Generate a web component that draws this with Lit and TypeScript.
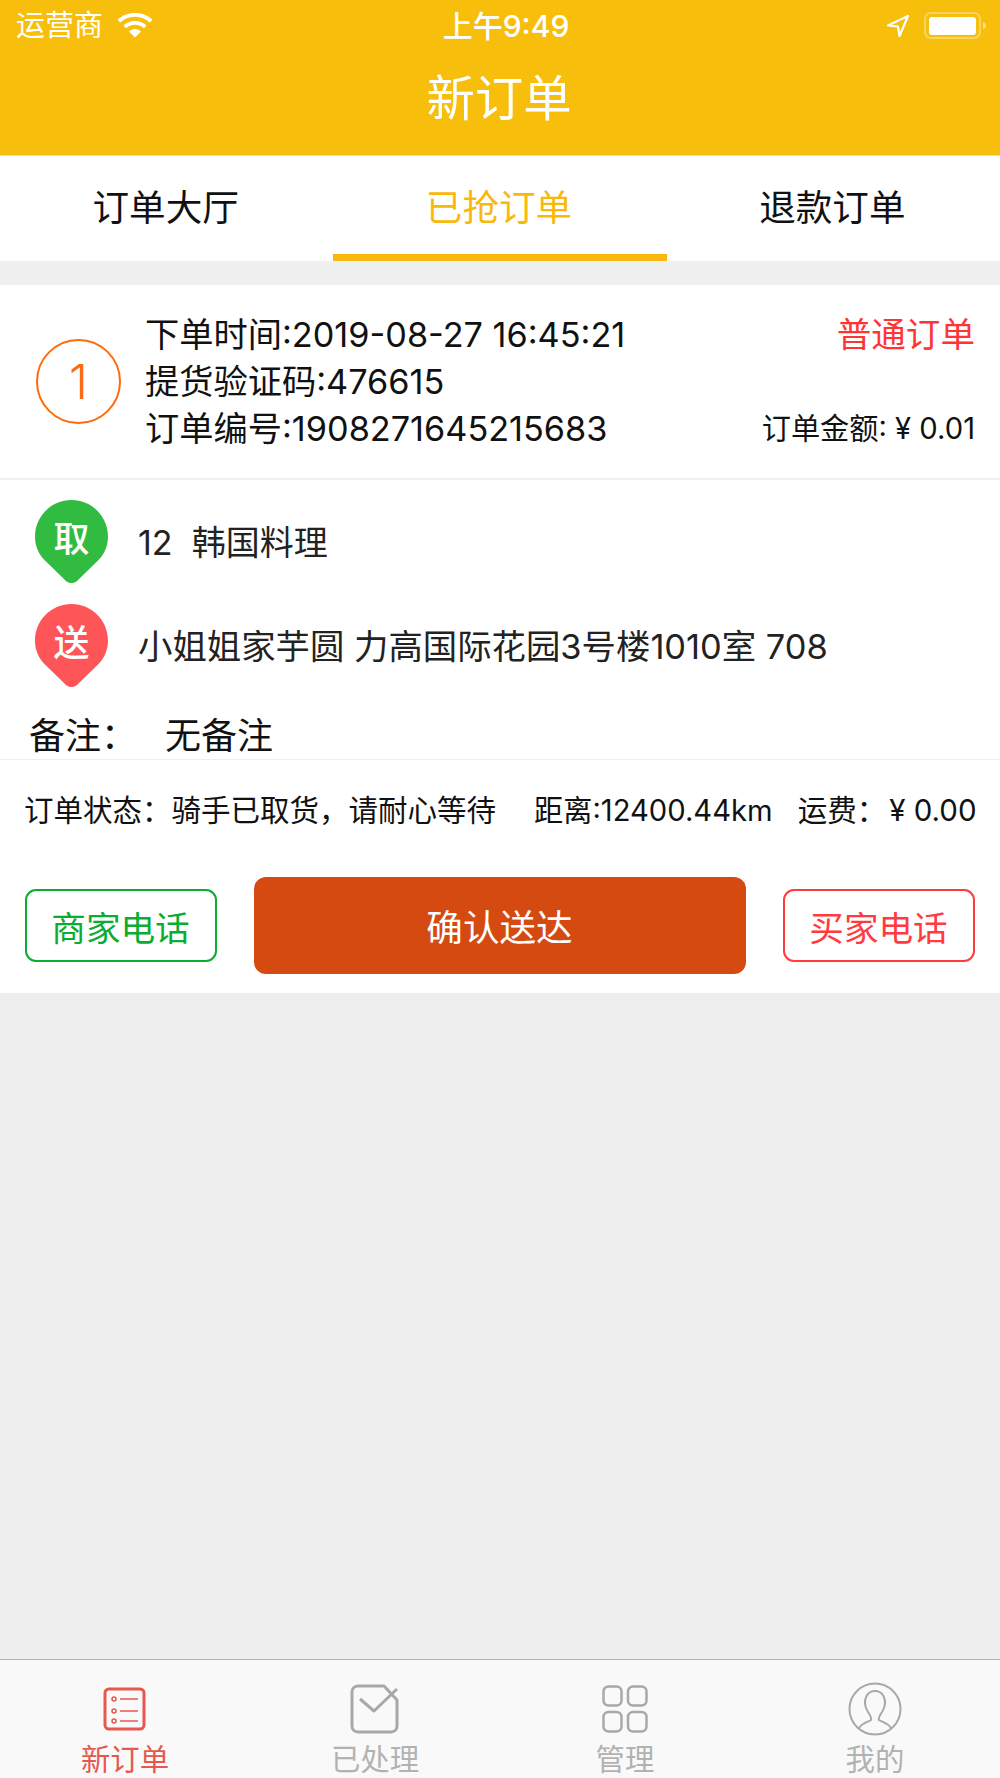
import { LitElement, html, css, svg } from "lit";
import { customElement } from "lit/decorators.js";

const pin = (color: string) => svg`<svg class="pinbg" width="73" height="83" viewBox="0 0 73 83"><path fill="${color}" d="M36.5 0C56.6 0 73 16.3 73 36.5C73 46.5 69 54.5 63 60.5L43.5 79.5C39.5 84.2 33.5 84.2 29.5 79.5L10 60.5C4 54.5 0 46.5 0 36.5C0 16.3 16.4 0 36.5 0Z"/></svg>`;

@customElement("app-root")
export class AppRoot extends LitElement {
  static styles = css`
    :host { display: block; font-family: "Inter", "Noto Sans CJK SC", sans-serif; color: #111; }
    * { box-sizing: border-box; }
    .page { height: 1778px; width: 1000px; display: flex; flex-direction: column; background: #eeeeee; overflow: hidden; }
    .head { height: 156px; background: #f8be0c; border-bottom: 1px solid #ddd; color: #fff; display: flex; flex-direction: column; flex: none; }
    .status { height: 50px; display: grid; grid-template-columns: 1fr auto 1fr; align-items: center; padding: 0 12px 0 16px; flex: none; }
    .status-left { display: flex; align-items: center; }
    .carrier { font-size: 29px; line-height: 50px; margin-top: 1px; }
    .wifi { margin-left: 14px; }
    .time { font-size: 30px; font-weight: 500; margin: -4px 0 0 8px; }
    .status-right { display: flex; align-items: center; gap: 14px; justify-content: flex-end; }
    .title { text-align: center; font-size: 48.4px; line-height: 76px; margin-top: 11px; padding-right: 2px; }
    .tabs { height: 105px; background: #fff; display: grid; grid-template-columns: repeat(3, 1fr); flex: none; }
    .tab { font-size: 36.6px; display: flex; justify-content: center; align-items: center; border-bottom: 7px solid transparent; color: #111; padding-right: 2px; }
    .tab.on { color: #f8b90c; border-bottom-color: #f8b90c; }
    .gap { height: 24px; background: #f0f0f0; flex: none; }
    .card { background: #fff; flex: none; }
    .top { height: 195px; display: flex; align-items: center; border-bottom: 2px solid #f0f0f0; padding: 0 24px 0 36px; }
    .circle { width: 85px; height: 85px; border: 2px solid #ff6a0d; border-radius: 50%; color: #ff6a0d; font-size: 48px; font-weight: 350; display: flex; align-items: center; justify-content: center; flex: none; }
    .info { margin-left: 24px; font-size: 34.25px; line-height: 47px; flex: 1; margin-top: -1px; white-space: nowrap; }
    .side { display: flex; flex-direction: column; justify-content: space-between; align-items: flex-end; height: 141px; margin-top: -1px; }
    .kind { font-size: 34.6px; line-height: 47px; color: #ff3535; margin-right: 1px; }
    .amount { font-size: 29.2px; line-height: 47px; white-space: pre; margin-right: 1px; }
    .route { padding: 20px 0 0 35px; display: flex; flex-direction: column; gap: 21px; }
    .stop { display: flex; align-items: center; height: 83px; }
    .pin { display: grid; width: 73px; height: 83px; flex: none; }
    .pin > * { grid-area: 1 / 1; }
    .pinbg { display: block; }
    .pinlabel { color: #fff; font-size: 36px; font-weight: 500; line-height: 79px; height: 79px; text-align: center; }
    .place { margin-left: 30px; font-size: 34.4px; color: #222; white-space: pre; margin-bottom: 3px; }
    .place.short { font-size: 34px; }
    .note { padding: 26px 0 0 29px; font-size: 36px; line-height: 46px; border-bottom: 1px solid #eee; white-space: pre; display: flex; height: 73px; }
    .note .val { margin-left: 28px; }
    .state { height: 100px; display: flex; align-items: center; padding: 0 0 4px 24px; font-size: 29.5px; white-space: nowrap; }
    .state .dist { margin-left: 38px; font-size: 29.2px; }
    .state .fee { margin-left: 25px; }
    .state .colon { margin-right: 3px; }
    .actions { display: flex; align-items: center; justify-content: space-between; padding: 17px 25px 19px; height: 133px; }
    .btn { background: #fff; border-radius: 11px; font-size: 34.6px; display: flex; align-items: center; justify-content: center; width: 192px; height: 73px; border: 2.5px solid; padding-right: 1px; }
    .btn.green { color: #0aac32; border-color: #0aac32; }
    .btn.red { color: #ff3b3f; border-color: #ff3b3f; }
    .btn.main { background: #d54a11; border: none; color: #fff; width: 492px; height: 97px; font-size: 36.6px; border-radius: 12px; }
    .spacer { flex: 1; }
    .bar { height: 119px; flex: none; background: #f9f9f9; border-top: 1px solid #b4b4b4; display: grid; grid-template-columns: repeat(4, 1fr); }
    .item { display: flex; flex-direction: column; align-items: center; color: #b2b2b2; font-size: 29.4px; }
    .item.on { color: #e5584f; }
    .icon { height: 84px; display: flex; align-items: center; justify-content: center; flex: none; padding-top: 14px; }
    .lab { line-height: 34px; margin-top: -1px; }
  `;

  render() {
    return html`<div class="page">
      <div class="head">
        <div class="status">
          <span class="status-left">
            <span class="carrier">运营商</span>
            <svg class="wifi" width="36" height="26" viewBox="0 0 36 26" fill="#fff">
              <path d="M18 0C11 0 5 2.600 .5 6.800L3.200 9.600C7 6 12 3.800 18 3.800S29 6 32.800 9.600L35.500 6.800C31 2.600 25 0 18 0Z"/>
              <path d="M18 8C13.300 8 9.500 9.700 6.500 12.500L9.200 15.300C11.500 13.200 14.500 11.800 18 11.800S24.500 13.200 26.800 15.300L29.500 12.500C26.500 9.700 22.700 8 18 8Z"/>
              <path d="M18 16C15.700 16 13.500 16.900 12 18.400L18 24.500L24 18.400C22.500 16.900 20.300 16 18 16Z"/>
            </svg>
          </span>
          <span class="time">上午9:49</span>
          <span class="status-right">
            <svg width="24" height="24" viewBox="0 0 24 24"><path d="M22 2L2 11.500L12 12.500L13.500 22Z" fill="none" stroke="#fff" stroke-width="2.200" stroke-linejoin="round"/></svg>
            <svg width="64" height="28" viewBox="0 0 64 28">
              <rect x="1" y="1" width="55" height="25" rx="6" fill="none" stroke="#fff" stroke-opacity=".35" stroke-width="2"/>
              <rect x="5" y="5" width="47" height="18" rx="3" fill="#fff"/>
              <path d="M59 10c2 .5 3 2 3 3.500s-1 3-3 3.500Z" fill="#fff" fill-opacity=".5"/>
            </svg>
          </span>
        </div>
        <div class="title">新订单</div>
      </div>
      <div class="tabs">
        <div class="tab">订单大厅</div>
        <div class="tab on">已抢订单</div>
        <div class="tab">退款订单</div>
      </div>
      <div class="gap"></div>
      <div class="card">
        <div class="top">
          <div class="circle">1</div>
          <div class="info">
            <div>下单时间:2019-08-27 16:45:21</div>
            <div>提货验证码:476615</div>
            <div>订单编号:1908271645215683</div>
          </div>
          <div class="side">
            <div class="kind">普通订单</div>
            <div class="amount">订单金额: ¥ 0.01</div>
          </div>
        </div>
        <div class="route">
          <div class="stop">
            <div class="pin">${pin("#32bb41")}<span class="pinlabel">取</span></div>
            <span class="place short">12  韩国料理</span>
          </div>
          <div class="stop">
            <div class="pin">${pin("#fd5558")}<span class="pinlabel">送</span></div>
            <span class="place">小姐姐家芋圆 力高国际花园3号楼1010室 708</span>
          </div>
        </div>
        <div class="note"><span>备注：</span><span class="val">无备注</span></div>
        <div class="state">
          <span>订单状态：骑手已取货，请耐心等待</span>
          <span class="dist">距离:12400.44km</span>
          <span class="fee"><span class="colon">运费：</span>¥ 0.00</span>
        </div>
        <div class="actions">
          <div class="btn green">商家电话</div>
          <div class="btn main">确认送达</div>
          <div class="btn red">买家电话</div>
        </div>
      </div>
      <div class="spacer"></div>
      <div class="bar">
        <div class="item on">
          <div class="icon">
            <svg width="44" height="44" viewBox="0 0 44 44" fill="none" stroke="#e5584f">
              <rect x="2" y="2" width="39" height="40" rx="4" stroke-width="3"/>
              <circle cx="11" cy="12" r="2" stroke-width="1.500"/><circle cx="11" cy="24" r="2" stroke-width="1.500"/><circle cx="11" cy="34" r="2" stroke-width="1.500"/>
              <path d="M17 12H35M17 24H35M17 34H35" stroke-width="1.500"/>
            </svg>
          </div>
          <span class="lab">新订单</span>
        </div>
        <div class="item">
          <div class="icon">
            <svg width="50" height="50" viewBox="0 0 50 50" fill="none" stroke="#a8a8a8" stroke-width="3">
              <path d="M34 2H8C4.500 2 2 4.500 2 8V42C2 45.500 4.500 48 8 48H41C44.500 48 47 45.500 47 42V16Z" stroke-linejoin="round"/>
              <path d="M10 15L24 27L47 5" stroke-linejoin="round"/>
            </svg>
          </div>
          <span class="lab">已处理</span>
        </div>
        <div class="item">
          <div class="icon">
            <svg width="46" height="48" viewBox="0 0 46 48" fill="none" stroke="#a8a8a8" stroke-width="2.500">
              <rect x="1.500" y="1.500" width="18" height="19" rx="5"/><rect x="26" y="1.500" width="18.500" height="19" rx="5"/>
              <rect x="1.500" y="27" width="18" height="19.500" rx="5"/><rect x="26" y="27" width="18.500" height="19.500" rx="5"/>
            </svg>
          </div>
          <span class="lab">管理</span>
        </div>
        <div class="item">
          <div class="icon">
            <svg width="54" height="54" viewBox="0 0 54 54" fill="none" stroke="#a8a8a8" stroke-width="2">
              <circle cx="27" cy="27" r="25.500"/>
              <path d="M11 46C14 41 20 40 23 38C24 36 22 33 20 30C17 25 16 19 18.500 14C20.500 10.500 23.500 9 27 9S33.500 10.500 35.500 14C38 19 37 25 34 30C32 33 30 36 31 38C34 40 40 41 43 46"/>
            </svg>
          </div>
          <span class="lab">我的</span>
        </div>
      </div>
    </div>`;
  }
}
